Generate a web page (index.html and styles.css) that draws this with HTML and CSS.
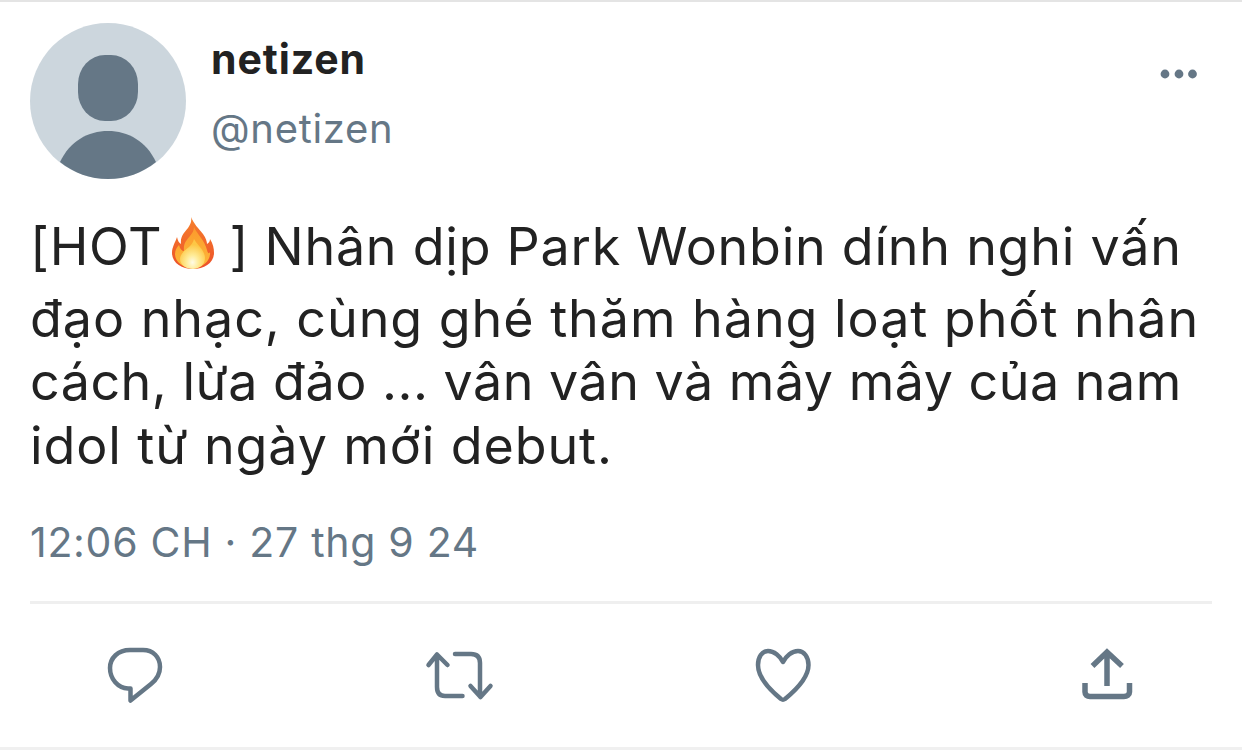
FILE: index.html
```html
<!DOCTYPE html>
<html lang="vi">
<head>
<meta charset="utf-8">
<title>Tweet</title>
<link rel="stylesheet" href="styles.css">
</head>
<body>
<main class="tweet">
  <header class="head">
    <svg class="avatar" viewBox="0 0 156 156" aria-hidden="true">
      <circle cx="78" cy="78" r="78" fill="#ccd6dd"/>
      <rect x="48" y="32" width="60" height="66" rx="27" ry="29" fill="#657786"/>
      <path d="M30 139C40 118 58 108 78 108C98 108 116 118 126 139C112 150 96 156 78 156C60 156 44 150 30 139Z" fill="#657786"/>
    </svg>
    <div class="names">
      <div class="name">netizen</div>
      <div class="handle">@netizen</div>
    </div>
    <svg class="more" viewBox="1160 69 38 10" aria-hidden="true">
      <circle cx="1165" cy="74" r="4.4"/><circle cx="1179" cy="74" r="4.4"/><circle cx="1192.500" cy="74" r="4.4"/>
    </svg>
  </header>
  <p class="text"><span class="line first">[HOT<svg class="flame" viewBox="172 220 44 54" aria-hidden="true">
      <defs>
        <linearGradient id="fireOuter" x1="0" y1="0" x2="0" y2="1">
          <stop offset="0" stop-color="#f6802c"/>
          <stop offset="1" stop-color="#ec5029"/>
        </linearGradient>
        <linearGradient id="fireMid" x1="0" y1="0" x2="0" y2="1">
          <stop offset="0" stop-color="#fb9a2c"/>
          <stop offset="1" stop-color="#fdb83a"/>
        </linearGradient>
        <radialGradient id="fireCore" cx="50%" cy="78%" r="60%">
          <stop offset="0" stop-color="#fffbe6"/>
          <stop offset=".4" stop-color="#ffec98"/>
          <stop offset="1" stop-color="#fdc745"/>
        </radialGradient>
      </defs>
      <path d="M192 221C195 228 199 232 204 238C207 242 208 246 208 248C210 247 211 245 211 243C214 248 215 252 215 257C215 267 205 273 194 273C183 273 173 267 173 257C173 251 176 247 178 241C179 245 180 247 182 248C181 240 186 236 189 232C191 229 193 226 192 221Z" fill="url(#fireOuter)"/>
      <path d="M195 231C198 238 206 245 208 254C209 258 210 258 211 256C212 264 204 272 194 272C184 272 176 266 176 258C176 254 178 251 180 249C181 253 183 255 185 255C184 247 188 244 191 240C193 237 195 235 195 231Z" fill="url(#fireMid)"/>
      <path d="M195 243C198 249 206 254 206 262C206 269 200 273 194 273C187 273 181 269 181 263C181 258 186 254 190 251C192 249 194 247 195 243Z" fill="url(#fireCore)"/>
    </svg>] Nhân dịp Park Wonbin dính nghi vấn</span><span class="line second">đạo nhạc, cùng ghé thăm hàng loạt phốt nhân</span><span class="line third">cách, lừa đảo ... vân vân và mây mây của nam</span><span class="line">idol từ ngày mới debut.</span></p>
  <div class="time">12:06 CH · 27 thg 9 24</div>
  <nav class="actions">
    <svg class="icon comment" viewBox="107 647 58 56" aria-hidden="true">
      <path class="st" d="M130 650H143C153 650 160 657 160 667C160 675 156 680 151 684L130.500 700.500V688.500H128C118 688 110 679 110 668C110 658 118 650 130 650Z"/>
    </svg>
    <svg class="icon retweet" viewBox="425 647 70 56" aria-hidden="true">
      <path class="st thin" d="M428.500 665L437 654.500L447.500 665M437 655V687C437 693 440 696 445 696H462.500M455 654H471C477 654 480 657 480 663V696.500M470.500 686L480.500 697L490.500 686"/>
    </svg>
    <svg class="icon heart" viewBox="755 647 60 56" aria-hidden="true">
      <path class="st" d="M783 662C780 656 774 651 768 651C762 651 758 657 758 665C758 677 770 690 781 699C782.500 700 783.500 700 785 699C796 690 808.500 677 808.500 665C808.500 657 804 651 798 651C792 651 786 656 783 662Z"/>
    </svg>
    <svg class="icon share" viewBox="1075 647 60 56" aria-hidden="true">
      <path class="st butt" d="M1107 686V652M1092.500 666L1107 652L1122 666M1085 683V692C1085 695 1087 696.500 1090 696.500H1124C1127 696.500 1129.500 695 1129.500 692V683"/>
    </svg>
  </nav>
</main>
</body>
</html>
```
FILE: styles.css
```css
* { box-sizing: border-box; }
html, body { margin: 0; height: 752px; overflow: hidden; background: #fff; }
.tweet {
  height: 750px;
  padding: 21px 30px 0;
  border-top: 2px solid #e4e4e4;
  border-bottom: 3px solid #f0f0f0;
  font-family: Inter, "Liberation Sans", sans-serif;
  color: #222;
}
.head { display: flex; align-items: flex-start; }
.avatar { width: 156px; height: 156px; flex: none; }
.names { margin-left: 25px; flex: 1; padding-top: 11px; }
.name { font-size: 41px; line-height: 50px; font-weight: 700; color: #222; letter-spacing: .9px; }
.handle { font-size: 40px; line-height: 50px; margin-top: 20px; color: #657786; font-weight: 400; letter-spacing: .7px; }
.more { width: 38px; height: 10px; margin: 46px 14px 0 0; fill: #657786; }
.text { margin: 36px 0 0; font-size: 52px; line-height: 63.500px; letter-spacing: .9px; }
.line { display: block; white-space: nowrap; }
.first { margin-bottom: 8px; letter-spacing: .75px; }
.second { letter-spacing: .95px; }
.third { letter-spacing: .5px; }
.flame { width: 44px; height: 54px; vertical-align: -5px; margin: 0 14px 0 9px; }
.time { margin-top: 40px; font-size: 41px; line-height: 50px; color: #657786; letter-spacing: .7px; }
.actions { margin-top: 34px; padding: 43px 0 0 77px; border-top: 3px solid #efefef; display: flex; gap: 260px; align-items: flex-start; }
.icon { height: 56px; flex: none; }
.comment { width: 58px; }
.retweet { width: 70px; }
.heart { width: 60px; }
.share { width: 60px; }
.st { fill: none; stroke: #657786; stroke-width: 4.500; stroke-linecap: round; stroke-linejoin: round; }
.thin { stroke-width: 4.500; }
.butt { stroke-linecap: butt; stroke-linejoin: miter; stroke-width: 5.500; }
```
